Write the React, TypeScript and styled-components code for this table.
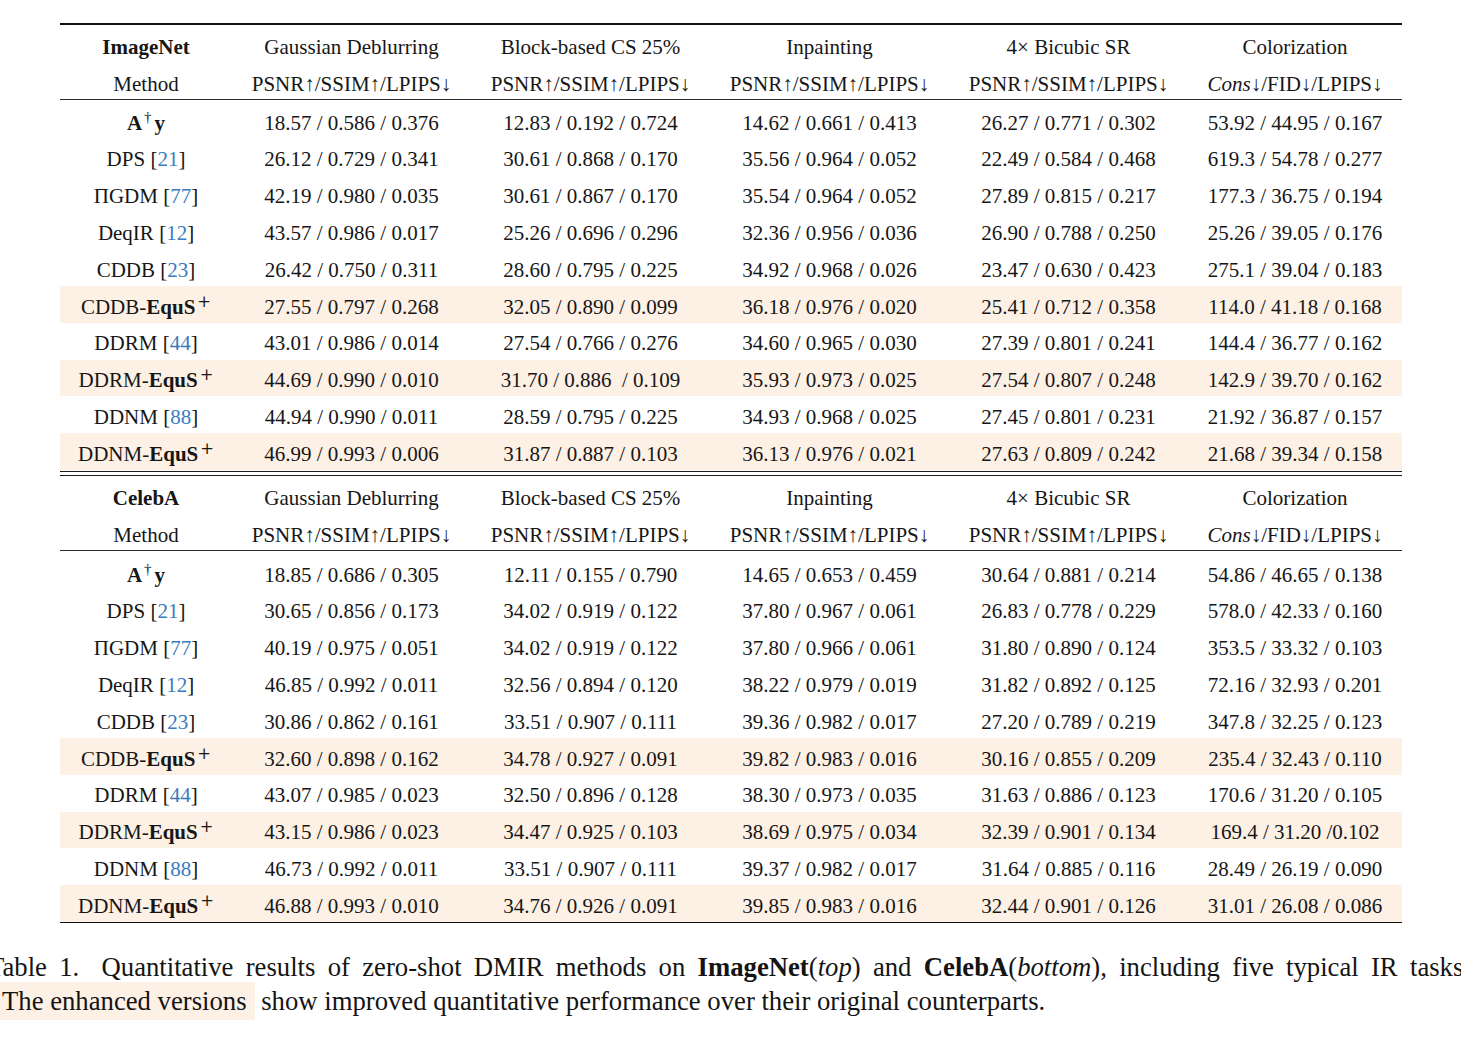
import React from "react";
import styled, { createGlobalStyle } from "styled-components";

const GlobalStyle = createGlobalStyle`
  html, body {
    margin: 0;
    padding: 0;
    background: #ffffff;
    overflow: hidden;
  }
  body {
    font-family: "Liberation Serif", "Times New Roman", serif;
    color: #161616;
  }
`;

const Page = styled.div`
  width: 1461px;
  height: 1050px;
  overflow: hidden;
  padding-top: 23px;
  box-sizing: border-box;
`;

const Table = styled.div`
  margin-left: 60px;
  width: 1342px;
  font-size: 21px;
`;

const Rule = styled.div<{ $h: number; $color?: string; $mt?: number; $mb?: number }>`
  height: ${(p) => p.$h}px;
  background: ${(p) => p.$color ?? "#1c1c1c"};
  margin-top: ${(p) => p.$mt ?? 0}px;
  margin-bottom: ${(p) => p.$mb ?? 0}px;
`;

const Row = styled.div<{ $h: number; $hl?: boolean }>`
  display: grid;
  grid-template-columns: 172px 239px 239px 239px 239px 214px;
  height: ${(p) => p.$h}px;
  background: ${(p) => (p.$hl ? "#fdf0e5" : "transparent")};
`;

const Cell = styled.div<{ $pt: number }>`
  padding-top: ${(p) => p.$pt}px;
  line-height: 21px;
  text-align: center;
  white-space: pre;
`;

const Ref = styled.span`
  color: #3a7bbd;
`;

const Dagger = styled.span`
  font-size: 0.72em;
  vertical-align: 0.5em;
  line-height: 0;
  margin-left: 2px;
`;

const MathY = styled.b`
  font-weight: 700;
  margin-left: 3px;
`;

const Plus = styled.span`
  font-family: "DejaVu Serif", "Liberation Serif", serif;
  font-weight: 300;
  font-size: 0.78em;
  vertical-align: 0.42em;
  line-height: 0;
  margin-left: 2px;
`;

const Bold = styled.b`
  font-weight: 700;
`;

const Ital = styled.i`
  font-style: italic;
`;

const Caption = styled.p`
  margin: 26.5px 0 0 -12px;
  width: 1482px;
  font-size: 26.7px;
  line-height: 34px;
  text-align: justify;
  color: #141414;
`;

const Label = styled.span`
  margin-right: 10px;
`;

const Mark = styled.span`
  background: #fdf0e5;
  padding: 4px 8px 4px 14px;
  white-space: nowrap;
`;

type Method =
  | { kind: "aty" }
  | { kind: "ref"; name: string; ref: string }
  | { kind: "equs"; base: string };

type DataRow = { m: Method; v: string[] };

const methodsOrder: Method[] = [
  { kind: "aty" },
  { kind: "ref", name: "DPS", ref: "21" },
  { kind: "ref", name: "ΠGDM", ref: "77" },
  { kind: "ref", name: "DeqIR", ref: "12" },
  { kind: "ref", name: "CDDB", ref: "23" },
  { kind: "equs", base: "CDDB" },
  { kind: "ref", name: "DDRM", ref: "44" },
  { kind: "equs", base: "DDRM" },
  { kind: "ref", name: "DDNM", ref: "88" },
  { kind: "equs", base: "DDNM" },
];

const imagenetValues: string[][] = [
  ["18.57 / 0.586 / 0.376", "12.83 / 0.192 / 0.724", "14.62 / 0.661 / 0.413", "26.27 / 0.771 / 0.302", "53.92 / 44.95 / 0.167"],
  ["26.12 / 0.729 / 0.341", "30.61 / 0.868 / 0.170", "35.56 / 0.964 / 0.052", "22.49 / 0.584 / 0.468", "619.3 / 54.78 / 0.277"],
  ["42.19 / 0.980 / 0.035", "30.61 / 0.867 / 0.170", "35.54 / 0.964 / 0.052", "27.89 / 0.815 / 0.217", "177.3 / 36.75 / 0.194"],
  ["43.57 / 0.986 / 0.017", "25.26 / 0.696 / 0.296", "32.36 / 0.956 / 0.036", "26.90 / 0.788 / 0.250", "25.26 / 39.05 / 0.176"],
  ["26.42 / 0.750 / 0.311", "28.60 / 0.795 / 0.225", "34.92 / 0.968 / 0.026", "23.47 / 0.630 / 0.423", "275.1 / 39.04 / 0.183"],
  ["27.55 / 0.797 / 0.268", "32.05 / 0.890 / 0.099", "36.18 / 0.976 / 0.020", "25.41 / 0.712 / 0.358", "114.0 / 41.18 / 0.168"],
  ["43.01 / 0.986 / 0.014", "27.54 / 0.766 / 0.276", "34.60 / 0.965 / 0.030", "27.39 / 0.801 / 0.241", "144.4 / 36.77 / 0.162"],
  ["44.69 / 0.990 / 0.010", "31.70 / 0.886  / 0.109", "35.93 / 0.973 / 0.025", "27.54 / 0.807 / 0.248", "142.9 / 39.70 / 0.162"],
  ["44.94 / 0.990 / 0.011", "28.59 / 0.795 / 0.225", "34.93 / 0.968 / 0.025", "27.45 / 0.801 / 0.231", "21.92 / 36.87 / 0.157"],
  ["46.99 / 0.993 / 0.006", "31.87 / 0.887 / 0.103", "36.13 / 0.976 / 0.021", "27.63 / 0.809 / 0.242", "21.68 / 39.34 / 0.158"],
];

const celebaValues: string[][] = [
  ["18.85 / 0.686 / 0.305", "12.11 / 0.155 / 0.790", "14.65 / 0.653 / 0.459", "30.64 / 0.881 / 0.214", "54.86 / 46.65 / 0.138"],
  ["30.65 / 0.856 / 0.173", "34.02 / 0.919 / 0.122", "37.80 / 0.967 / 0.061", "26.83 / 0.778 / 0.229", "578.0 / 42.33 / 0.160"],
  ["40.19 / 0.975 / 0.051", "34.02 / 0.919 / 0.122", "37.80 / 0.966 / 0.061", "31.80 / 0.890 / 0.124", "353.5 / 33.32 / 0.103"],
  ["46.85 / 0.992 / 0.011", "32.56 / 0.894 / 0.120", "38.22 / 0.979 / 0.019", "31.82 / 0.892 / 0.125", "72.16 / 32.93 / 0.201"],
  ["30.86 / 0.862 / 0.161", "33.51 / 0.907 / 0.111", "39.36 / 0.982 / 0.017", "27.20 / 0.789 / 0.219", "347.8 / 32.25 / 0.123"],
  ["32.60 / 0.898 / 0.162", "34.78 / 0.927 / 0.091", "39.82 / 0.983 / 0.016", "30.16 / 0.855 / 0.209", "235.4 / 32.43 / 0.110"],
  ["43.07 / 0.985 / 0.023", "32.50 / 0.896 / 0.128", "38.30 / 0.973 / 0.035", "31.63 / 0.886 / 0.123", "170.6 / 31.20 / 0.105"],
  ["43.15 / 0.986 / 0.023", "34.47 / 0.925 / 0.103", "38.69 / 0.975 / 0.034", "32.39 / 0.901 / 0.134", "169.4 / 31.20 /0.102"],
  ["46.73 / 0.992 / 0.011", "33.51 / 0.907 / 0.111", "39.37 / 0.982 / 0.017", "31.64 / 0.885 / 0.116", "28.49 / 26.19 / 0.090"],
  ["46.88 / 0.993 / 0.010", "34.76 / 0.926 / 0.091", "39.85 / 0.983 / 0.016", "32.44 / 0.901 / 0.126", "31.01 / 26.08 / 0.086"],
];

const makeRows = (vals: string[][]): DataRow[] =>
  vals.map((v, i) => ({ m: methodsOrder[i], v }));

const MethodLabel: React.FC<{ m: Method }> = ({ m }) => {
  if (m.kind === "aty") {
    return (
      <>
        <Bold>A</Bold>
        <Dagger>†</Dagger>
        <MathY>y</MathY>
      </>
    );
  }
  if (m.kind === "ref") {
    return (
      <>
        {m.name} [<Ref>{m.ref}</Ref>]
      </>
    );
  }
  return (
    <>
      {m.base}-<Bold>EquS</Bold>
      <Plus>+</Plus>
    </>
  );
};

const Metric = "PSNR↑/SSIM↑/LPIPS↓";

const HeaderBlock: React.FC<{ dataset: string }> = ({ dataset }) => (
  <>
    <Row $h={37}>
      <Cell $pt={12}>
        <Bold>{dataset}</Bold>
      </Cell>
      <Cell $pt={12}>Gaussian Deblurring</Cell>
      <Cell $pt={12}>Block-based CS 25%</Cell>
      <Cell $pt={12}>Inpainting</Cell>
      <Cell $pt={12}>4× Bicubic SR</Cell>
      <Cell $pt={12}>Colorization</Cell>
    </Row>
    <Row $h={37}>
      <Cell $pt={12}>Method</Cell>
      <Cell $pt={12}>{Metric}</Cell>
      <Cell $pt={12}>{Metric}</Cell>
      <Cell $pt={12}>{Metric}</Cell>
      <Cell $pt={12}>{Metric}</Cell>
      <Cell $pt={12}>
        <Ital>Cons</Ital>↓/FID↓/LPIPS↓
      </Cell>
    </Row>
  </>
);

const BodyBlock: React.FC<{ rows: DataRow[] }> = ({ rows }) => (
  <>
    {rows.map((r, i) => (
      <Row key={i} $h={36.8} $hl={r.m.kind === "equs"}>
        <Cell $pt={10.7}>
          <MethodLabel m={r.m} />
        </Cell>
        {r.v.map((val, j) => (
          <Cell key={j} $pt={10.7}>
            {val}
          </Cell>
        ))}
      </Row>
    ))}
  </>
);

export default function App() {
  return (
    <>
      <GlobalStyle />
      <Page>
        <Table>
          <Rule $h={1.5} $color="#111" />
          <HeaderBlock dataset="ImageNet" />
          <Rule $h={1} $color="#2a2a2a" $mb={2.5} />
          <BodyBlock rows={makeRows(imagenetValues)} />
          <Rule $h={1} $color="#1a1a1a" $mt={1.5} $mb={3} />
          <Rule $h={1} $color="#1a1a1a" />
          <HeaderBlock dataset="CelebA" />
          <Rule $h={1} $color="#2a2a2a" $mb={2.5} />
          <BodyBlock rows={makeRows(celebaValues)} />
          <Rule $h={1.5} $color="#111" />
        </Table>
        <Caption>
          <Label>Table 1.</Label> Quantitative results of zero-shot DMIR methods on{" "}
          <Bold>ImageNet</Bold>(<Ital>top</Ital>) and <Bold>CelebA</Bold>(<Ital>bottom</Ital>),
          including five typical IR tasks. <Mark>The enhanced versions</Mark> show improved
          quantitative performance over their original counterparts.
        </Caption>
      </Page>
    </>
  );
}
